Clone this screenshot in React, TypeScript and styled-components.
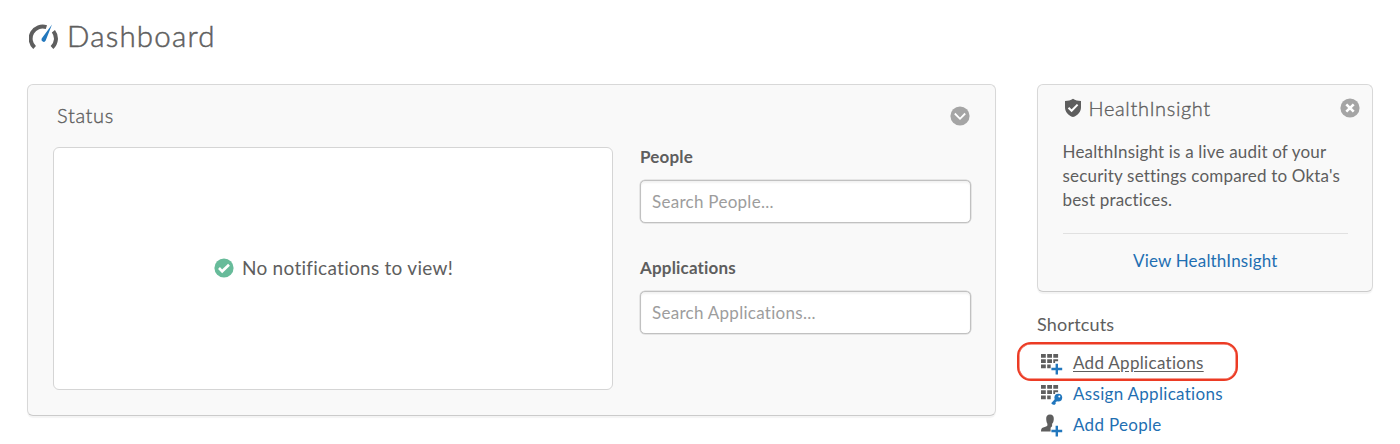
import React from "react";
import styled, { createGlobalStyle } from "styled-components";

const GlobalStyle = createGlobalStyle`
  * { box-sizing: border-box; }
  body {
    margin: 0;
    background: #fff;
    color: #5e5e5e;
    font-family: Lato, "Liberation Sans", sans-serif;
    font-size: 17px;
    font-variant-ligatures: none;
    letter-spacing: 0.18px;
    overflow: hidden;
  }
  h1, h2, p, ul { margin: 0; padding: 0; font-weight: 400; }
`;

const Page = styled.main`
  height: 444px;
  padding: 17px 27px 0;
  overflow: hidden;
`;

const PageHeader = styled.header`
  display: flex;
  align-items: center;
  gap: 9px;
  height: 40px;
  margin-bottom: 27px;
  padding-left: 2px;
`;

const PageTitle = styled.h1`
  padding-bottom: 2px;
  font-size: 29.5px;
  font-weight: 300;
  line-height: 38px;
  letter-spacing: 1.2px;
  -webkit-text-stroke: 0.5px currentColor;
`;

const Columns = styled.div`
  display: flex;
  align-items: flex-start;
  gap: 41px;
`;

const Panel = styled.section`
  background: #f9f9f9;
  border: 1px solid #d8d8d8;
  border-bottom-color: #cbcbcb;
  border-radius: 6px;
  box-shadow: 0 2px 1px #f4f4f4;
`;

const StatusPanel = styled(Panel)`
  width: 969px;
  height: 332px;
  padding: 14px 25px 0;
`;

const PanelHeader = styled.div`
  display: flex;
  align-items: center;
  justify-content: space-between;
  height: 34px;
  padding-left: 4px;
  margin-bottom: 14px;
`;

const Heading = styled.h2<{ $raise?: number }>`
  padding-bottom: ${(p) => p.$raise ?? 0}px;
  font-size: 20px;
  font-weight: 300;
  line-height: 24px;
  letter-spacing: 0.65px;
  -webkit-text-stroke: 0.35px currentColor;
`;

const StatusBody = styled.div`
  display: flex;
  gap: 27px;
`;

const Notifications = styled.div`
  display: flex;
  flex: none;
  align-items: center;
  justify-content: center;
  gap: 8px;
  width: 560px;
  height: 243px;
  padding: 0 0 2px 1px;
  background: #fff;
  border: 1px solid #d5d5d5;
  border-radius: 6px;
  font-size: 19px;
  letter-spacing: 0.28px;
`;

const SearchColumn = styled.div`
  flex: none;
  width: 331px;
`;

const Field = styled.label`
  display: block;
  height: 110.5px;
`;

const FieldName = styled.span`
  display: block;
  height: 33px;
  font-size: 17px;
  font-weight: 700;
  line-height: 20px;
`;

const SearchInput = styled.input`
  display: block;
  width: 331px;
  height: 43px;
  padding: 0 11px;
  background: #fff;
  border: 1.5px solid #c1c1c1;
  border-radius: 5px;
  box-shadow: 0 0 0 0.5px #d4d4d4, inset 0 2px 2px #f3f3f3;
  color: #5e5e5e;
  font: inherit;
  letter-spacing: 0.28px;
  outline: none;
  &::placeholder { color: #9d9d9d; opacity: 1; }
`;

const Sidebar = styled.aside`
  width: 336px;
`;

const InsightCard = styled(Panel)`
  height: 208px;
  padding: 10px 12px 0 24.5px;
`;

const InsightHeader = styled.div`
  display: flex;
  align-items: center;
  height: 26px;
  gap: 6px;
  ${Heading} { flex: 1; }
`;

const InsightText = styled.p`
  margin: 19px 12px 0 0;
  padding-bottom: 21px;
  border-bottom: 1px solid #e1e1e1;
  line-height: 24px;
  white-space: nowrap;
`;

const InsightLink = styled.a`
  display: block;
  margin: 15px 12px 0 0;
  color: #1f6fb2;
  line-height: 24px;
  text-align: center;
`;

const ShortcutsTitle = styled.h2`
  margin-top: 20px;
  font-size: 18px;
  line-height: 24px;
`;

const ShortcutList = styled.ul`
  margin: 6px 0 0 -20px;
  list-style: none;
`;

const Shortcut = styled.li<{ $marked?: boolean }>`
  display: flex;
  align-items: center;
  gap: 10px;
  width: 221px;
  height: ${(p) => (p.$marked ? 39 : 31)}px;
  margin-bottom: ${(p) => (p.$marked ? -3 : 0)}px;
  padding-top: ${(p) => (p.$marked ? 3 : 0)}px;
  padding-left: ${(p) => (p.$marked ? 21 : 23)}px;
  border: ${(p) => (p.$marked ? "2px solid #ec3b24" : "none")};
  box-shadow: ${(p) => (p.$marked ? "inset 0 0 0 0.5px #ec3b24" : "none")};
  border-radius: 14px;
`;

const ShortcutLink = styled.a<{ $active?: boolean }>`
  color: ${(p) => (p.$active ? "#5e5e5e" : "#1f6fb2")};
  text-decoration: ${(p) => (p.$active ? "underline" : "none")};
  text-underline-offset: 2px;
  line-height: 24px;
  letter-spacing: 0.3px;
  white-space: nowrap;
`;

const GaugeIcon = () => (
  <svg width="29" height="26" viewBox="0 0 29 26" fill="none">
    <path d="M5.6 23.5A12 12 0 0 1 17.4 3.2M24.4 7.2A12 12 0 0 1 23 23.5" stroke="#5e5e5e" strokeWidth="4" />
    <path d="M23 .5 16.7 16.6A2.2 2.2 0 1 1 12.7 14.6Z" fill="#2277bd" />
  </svg>
);

const ChevronBadge = () => (
  <svg width="20" height="20" viewBox="0 0 20 20" fill="none">
    <circle cx="10" cy="10" r="9.6" fill="#a5a5a5" />
    <path d="M4.8 7.5 10 12.8 15.2 7.5" stroke="#fff" strokeWidth="1.8" />
  </svg>
);

const CloseBadge = () => (
  <svg width="20" height="20" viewBox="0 0 20 20" fill="none">
    <circle cx="10" cy="10" r="9.6" fill="#a5a5a5" />
    <path d="m6.3 6.3 7.4 7.4M13.7 6.3l-7.4 7.4" stroke="#fff" strokeWidth="2.6" />
  </svg>
);

const CheckBadge = () => (
  <svg width="20" height="20" viewBox="0 0 20 20" fill="none">
    <circle cx="10" cy="10" r="9.6" fill="#67bb9a" />
    <path d="m5 10 3.2 3.3L15 6.8" stroke="#fff" strokeWidth="2.6" />
  </svg>
);

const ShieldIcon = () => (
  <svg width="20" height="20" viewBox="0 0 20 20" fill="none">
    <path d="M10 .7c2.2 1.4 5 2.2 8 2.3v6.2c0 4.8-3.2 8.2-8 9.9-4.8-1.7-8-5.1-8-9.9V3c3-.1 5.8-.9 8-2.3Z" fill="#5e5e5e" />
    <path d="m5.5 9.7 3.1 3.1 6-6.2" stroke="#fff" strokeWidth="2" />
  </svg>
);

const GridCells = () => (
  <path
    d="M1 3h4.8v3.7H1zM7.2 3h4.8v3.7H7.2zM13.3 3h4.8v3.7h-4.8zM1 8.3h4.8V12H1zM7.2 8.3h4.8V12H7.2zM13.3 8.3h4.8v2h-3V12h-1.8zM1 13.6h4.8v3.7H1zM7.2 13.6h3.5v3.7H7.2z"
    fill="#5e5e5e"
  />
);

const PlusMark = () => <path d="M16.8 12.7v10.8M11.4 18H22.2" stroke="#2277bd" strokeWidth="2.4" />;

const AddAppsIcon = () => (
  <svg width="23" height="24" viewBox="0 0 23 24">
    <GridCells />
    <PlusMark />
  </svg>
);

const AssignAppsIcon = () => (
  <svg width="23" height="24" viewBox="0 0 23 24" fill="none">
    <GridCells />
    <circle cx="18.3" cy="15.6" r="3.9" fill="#2277bd" />
    <path d="m16.5 17.5-4.3 4.6" stroke="#2277bd" strokeWidth="2.8" />
    <path d="m13.5 20.5 1.7 1.7" stroke="#2277bd" strokeWidth="2" />
    <circle cx="19.3" cy="14.6" r="1" fill="#fff" />
  </svg>
);

const AddPersonIcon = () => (
  <svg width="23" height="24" viewBox="0 0 23 24">
    <path
      d="M10 1.5c2.7 0 3.9 1.7 3.8 4.5-.1 2.4-.7 3.8-1.7 4.8v2.4l-1.5 1.5v3.9H1c0-2.4.3-3.5 2.2-4.2 2.2-.9 4-1.2 4.2-2v-1.6C6.8 9.8 6.3 8.3 6.2 6 6.1 3.2 7.3 1.5 10 1.5Z"
      fill="#5e5e5e"
    />
    <PlusMark />
  </svg>
);

export default function App() {
  return (
    <>
      <GlobalStyle />
      <Page>
        <PageHeader>
          <GaugeIcon />
          <PageTitle>Dashboard</PageTitle>
        </PageHeader>
        <Columns>
          <StatusPanel>
            <PanelHeader>
              <Heading $raise={2}>Status</Heading>
              <ChevronBadge />
            </PanelHeader>
            <StatusBody>
              <Notifications>
                <CheckBadge />
                <span>No notifications to view!</span>
              </Notifications>
              <SearchColumn>
                <Field>
                  <FieldName>People</FieldName>
                  <SearchInput placeholder="Search People..." />
                </Field>
                <Field>
                  <FieldName>Applications</FieldName>
                  <SearchInput placeholder="Search Applications..." />
                </Field>
              </SearchColumn>
            </StatusBody>
          </StatusPanel>
          <Sidebar>
            <InsightCard>
              <InsightHeader>
                <ShieldIcon />
                <Heading>HealthInsight</Heading>
                <CloseBadge />
              </InsightHeader>
              <InsightText>
                HealthInsight is a live audit of your
                <br />
                security settings compared to Okta's
                <br />
                best practices.
              </InsightText>
              <InsightLink>View HealthInsight</InsightLink>
            </InsightCard>
            <ShortcutsTitle>Shortcuts</ShortcutsTitle>
            <ShortcutList>
              <Shortcut $marked>
                <AddAppsIcon />
                <ShortcutLink $active>Add Applications</ShortcutLink>
              </Shortcut>
              <Shortcut>
                <AssignAppsIcon />
                <ShortcutLink>Assign Applications</ShortcutLink>
              </Shortcut>
              <Shortcut>
                <AddPersonIcon />
                <ShortcutLink>Add People</ShortcutLink>
              </Shortcut>
            </ShortcutList>
          </Sidebar>
        </Columns>
      </Page>
    </>
  );
}
